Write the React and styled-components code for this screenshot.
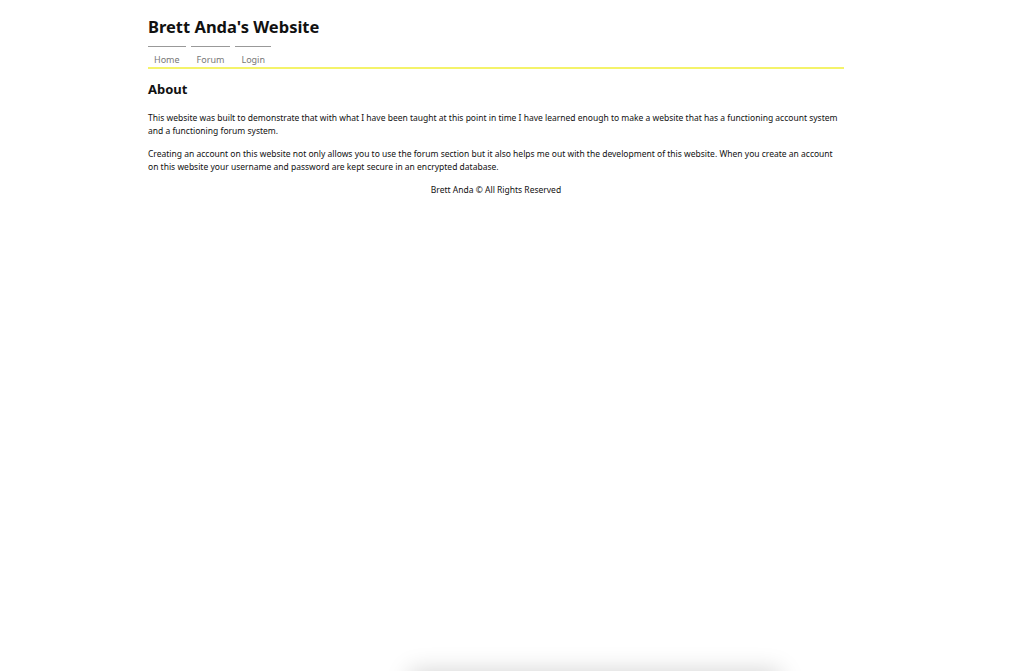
import React from 'react'
import styled, { createGlobalStyle } from 'styled-components'

const GlobalStyle = createGlobalStyle`
    html, body {
        margin: 0;
        padding: 0;
        background: #ffffff;
        font-family: "Noto Sans", "DejaVu Sans", sans-serif;
        color: #111;
    }
`

const Page = styled.div`
    width: 696px;
    margin-left: 148px;
    padding-top: 14px;
`

const Title = styled.h1`
    margin: 0;
    font-size: 16.5px;
    line-height: 26px;
    font-weight: 700;
    color: #111;
`

const Nav = styled.nav`
    display: flex;
    gap: 5px;
    margin-top: 6px;
    border-bottom: 2px solid #f4f36a;
`

const NavItem = styled.a`
    display: block;
    padding: 7px 6px 1px;
    border-top: 1px solid #999;
    color: #777;
    font-size: 9px;
    line-height: 12px;
    text-decoration: none;
`

const Main = styled.main`
    padding-top: 10px;
`

const Heading = styled.h2`
    margin: 0 0 12px;
    font-size: 13px;
    line-height: 20px;
    font-weight: 700;
`

const Para = styled.p`
    margin: 0 0 10px;
    font-size: 8.5px;
    line-height: 13px;
    color: #111;
`

const Footer = styled.footer`
    text-align: center;
    font-size: 8.5px;
    line-height: 13px;
    margin-top: 5px;
`

const Shadow = styled.div`
    position: fixed;
    left: 410px;
    width: 370px;
    top: 671px;
    height: 40px;
    background: #fff;
    box-shadow: 0 0 24px rgba(0, 0, 0, 0.18);
`

export default function App() {
    return (
        <>
            <GlobalStyle />
            <Page>
                <Title>Brett Anda's Website</Title>
                <Nav>
                    <NavItem href="#">Home</NavItem>
                    <NavItem href="#">Forum</NavItem>
                    <NavItem href="#">Login</NavItem>
                </Nav>
                <Main>
                    <Heading>About</Heading>
                    <Para>
                        This website was built to demonstrate that with what I have been taught at this point in time I have learned enough to make a website that has a functioning account system and a functioning forum system.
                    </Para>
                    <Para>
                        Creating an account on this website not only allows you to use the forum section but it also helps me out with the development of this website. When you create an account on this website your username and password are kept secure in an encrypted database.
                    </Para>
                </Main>
                <Footer>Brett Anda © All Rights Reserved</Footer>
            </Page>
            <Shadow />
        </>
    )
}
